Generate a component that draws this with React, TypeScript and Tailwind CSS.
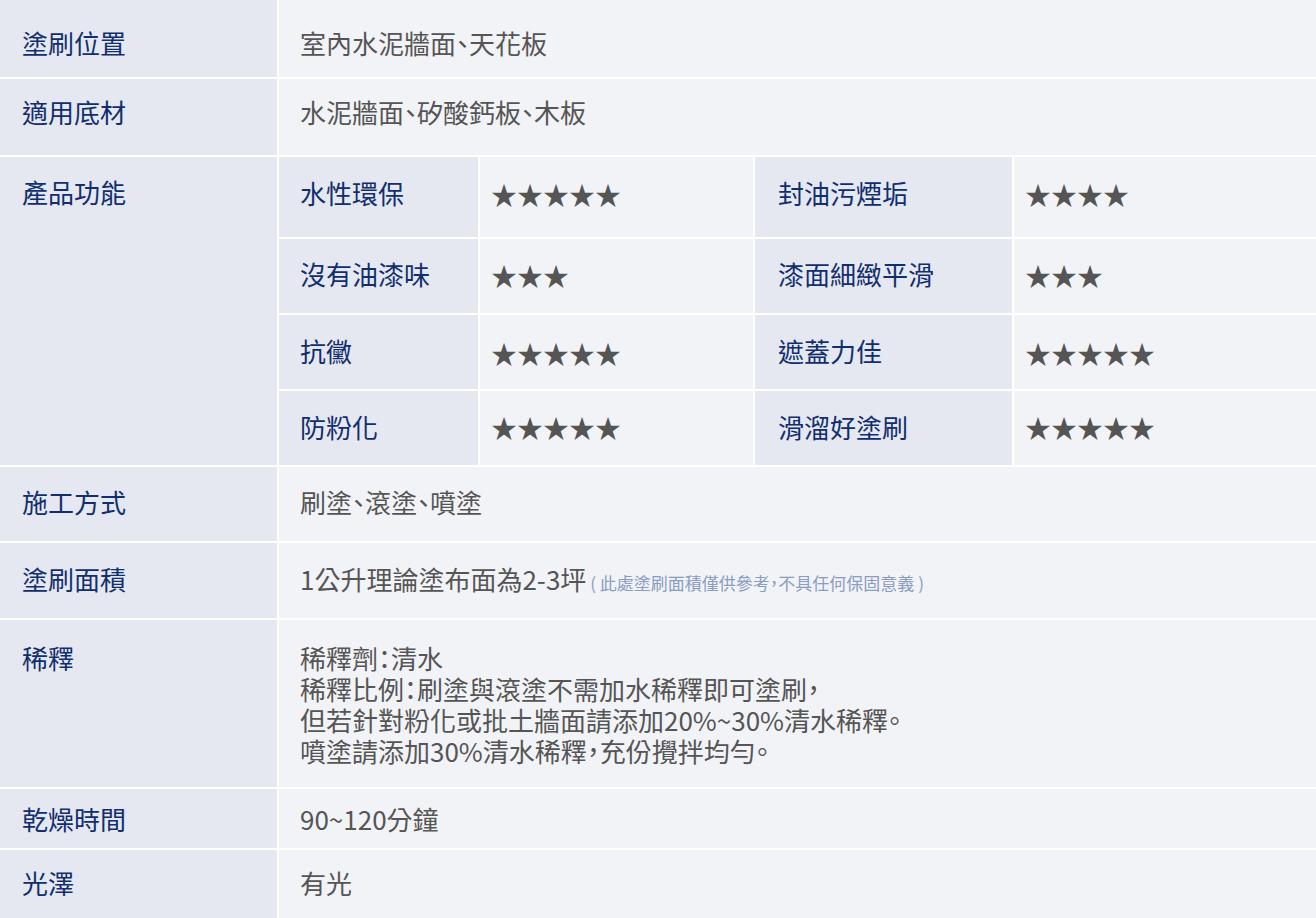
import React from "react";

const FONT = { fontFamily: '"Noto Sans CJK TC", "Noto Sans CJK SC", sans-serif' };

function Label({ children, pt }: { children: React.ReactNode; pt: string }) {
  return (
    <div className={`w-[277px] shrink-0 bg-[#e5e8f0] pl-[22px] text-[26px] leading-[31px] text-[#112e6e] ${pt}`}>
      {children}
    </div>
  );
}

function Value({ children, pt }: { children: React.ReactNode; pt: string }) {
  return (
    <div className={`flex-1 bg-[#f2f3f7] pl-[21px] text-[26px] leading-[31px] text-[#555555] ${pt}`}>
      {children}
    </div>
  );
}

function Stars({ n }: { n: number }) {
  return <span className="text-[#555555]">{"★".repeat(n)}</span>;
}

type Sub = { a: string; as: number; b: string; bs: number; h: string; pt: string; spt: string };

const subs: Sub[] = [
  { a: "水性環保", as: 5, b: "封油污煙垢", bs: 4, h: "h-[80px]", pt: "pt-[20px]", spt: "pt-[21px]" },
  { a: "沒有油漆味", as: 3, b: "漆面細緻平滑", bs: 3, h: "h-[74px]", pt: "pt-[19px]", spt: "pt-[20px]" },
  { a: "抗黴", as: 5, b: "遮蓋力佳", bs: 5, h: "h-[74px]", pt: "pt-[20px]", spt: "pt-[22px]" },
  { a: "防粉化", as: 5, b: "滑溜好塗刷", bs: 5, h: "h-[74px]", pt: "pt-[20px]", spt: "pt-[20px]" },
];

export default function App() {
  return (
    <div
      style={FONT}
      className="w-[1316px] h-[918px] bg-white flex flex-col gap-[2px] overflow-hidden [font-feature-settings:'halt']"
    >
      <div className="flex gap-[2px] h-[77px]">
        <Label pt="pt-[27px]">塗刷位置</Label>
        <Value pt="pt-[27px]">室內水泥牆面、天花板</Value>
      </div>
      <div className="flex gap-[2px] h-[76px]">
        <Label pt="pt-[17px]">適用底材</Label>
        <Value pt="pt-[17px]">水泥牆面、矽酸鈣板、木板</Value>
      </div>
      <div className="flex gap-[2px] h-[308px]">
        <Label pt="pt-[19px]">產品功能</Label>
        <div className="flex-1 flex flex-col gap-[2px]">
          {subs.map((s, i) => (
            <div key={i} className={`flex gap-[2px] ${s.h} text-[26px] leading-[31px]`}>
              <div className={`w-[199px] bg-[#e5e8f0] pl-[21px] text-[#112e6e] ${s.pt}`}>{s.a}</div>
              <div className={`w-[273px] bg-[#f2f3f7] pl-[11px] ${s.spt}`}>
                <Stars n={s.as} />
              </div>
              <div className={`w-[257px] bg-[#e5e8f0] pl-[23px] text-[#112e6e] ${s.pt}`}>{s.b}</div>
              <div className={`flex-1 bg-[#f2f3f7] pl-[11px] ${s.spt}`}>
                <Stars n={s.bs} />
              </div>
            </div>
          ))}
        </div>
      </div>
      <div className="flex gap-[2px] h-[74px]">
        <Label pt="pt-[19px]">施工方式</Label>
        <Value pt="pt-[19px]">刷塗、滾塗、噴塗</Value>
      </div>
      <div className="flex gap-[2px] h-[75px]">
        <Label pt="pt-[20px]">塗刷面積</Label>
        <Value pt="pt-[20px]">
          <span>1公升理論塗布面為2-3坪</span>
          <span className="ml-[4px] text-[17px] text-[#8a9cc2]">( 此處塗刷面積僅供參考，不具任何保固意義 )</span>
        </Value>
      </div>
      <div className="flex gap-[2px] h-[167px]">
        <Label pt="pt-[22px]">稀釋</Label>
        <Value pt="pt-[22px]">
          <div>稀釋劑：清水</div>
          <div>稀釋比例：刷塗與滾塗不需加水稀釋即可塗刷，</div>
          <div>但若針對粉化或批土牆面請添加20%~30%清水稀釋。</div>
          <div>噴塗請添加30%清水稀釋，充份攪拌均勻。</div>
        </Value>
      </div>
      <div className="flex gap-[2px] h-[59px]">
        <Label pt="pt-[14px]">乾燥時間</Label>
        <Value pt="pt-[14px]">90~120分鐘</Value>
      </div>
      <div className="flex gap-[2px] flex-1">
        <Label pt="pt-[17px]">光澤</Label>
        <Value pt="pt-[17px]">有光</Value>
      </div>
    </div>
  );
}
